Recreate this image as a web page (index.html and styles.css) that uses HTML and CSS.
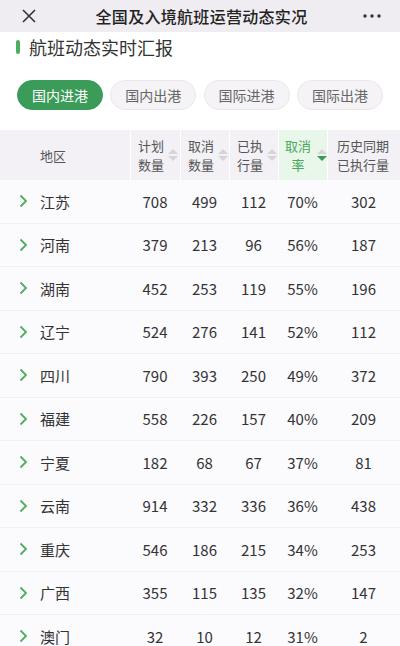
FILE: index.html
```html
<!DOCTYPE html>
<html lang="zh">
<head>
<meta charset="utf-8">
<link rel="stylesheet" href="styles.css">
</head>
<body>
<div class="nav">
  <svg class="close" width="16" height="16" viewBox="0 0 16 16"><path d="M2 2L14 14M14 2L2 14" stroke="#333" stroke-width="1.6" fill="none"/></svg>
  <div class="nav-title">全国及入境航班运营动态实况</div>
  <svg class="more" width="20" height="6" viewBox="0 0 20 6"><circle cx="3" cy="3" r="1.7" fill="#333"/><circle cx="10" cy="3" r="1.7" fill="#333"/><circle cx="17" cy="3" r="1.7" fill="#333"/></svg>
</div>
<div class="section-title"><span class="bar"></span>航班动态实时汇报</div>
<div class="tabs">
  <div class="tab active">国内进港</div>
  <div class="tab">国内出港</div>
  <div class="tab">国际进港</div>
  <div class="tab">国际出港</div>
</div>
<div class="table">
  <div class="th th-area">地区</div>
  <div class="th"><span class="lbl">计划<br>数量</span><span class="sort"><i class="up"></i><i class="down"></i></span></div>
  <div class="th"><span class="lbl">取消<br>数量</span><span class="sort"><i class="up"></i><i class="down"></i></span></div>
  <div class="th"><span class="lbl">已执<br>行量</span><span class="sort"><i class="up"></i><i class="down"></i></span></div>
  <div class="th th-active"><span class="lbl center">取消<br>率</span><span class="sort"><i class="up"></i><i class="down on"></i></span></div>
  <div class="th th-hist"><span class="lbl">历史同期<br>已执行量</span></div>
</div>
<div class="rows" id="rows">
  <div class="row"><div class="area"><svg class="chev" width="9" height="14" viewBox="0 0 9 14"><path d="M1.5 1.5L7 7L1.5 12.5" stroke="#4cae5e" stroke-width="1.8" fill="none"/></svg>江苏</div><div>708</div><div>499</div><div>112</div><div>70%</div><div>302</div></div>
  <div class="row"><div class="area"><svg class="chev" width="9" height="14" viewBox="0 0 9 14"><path d="M1.5 1.5L7 7L1.5 12.5" stroke="#4cae5e" stroke-width="1.8" fill="none"/></svg>河南</div><div>379</div><div>213</div><div>96</div><div>56%</div><div>187</div></div>
  <div class="row"><div class="area"><svg class="chev" width="9" height="14" viewBox="0 0 9 14"><path d="M1.5 1.5L7 7L1.5 12.5" stroke="#4cae5e" stroke-width="1.8" fill="none"/></svg>湖南</div><div>452</div><div>253</div><div>119</div><div>55%</div><div>196</div></div>
  <div class="row"><div class="area"><svg class="chev" width="9" height="14" viewBox="0 0 9 14"><path d="M1.5 1.5L7 7L1.5 12.5" stroke="#4cae5e" stroke-width="1.8" fill="none"/></svg>辽宁</div><div>524</div><div>276</div><div>141</div><div>52%</div><div>112</div></div>
  <div class="row"><div class="area"><svg class="chev" width="9" height="14" viewBox="0 0 9 14"><path d="M1.5 1.5L7 7L1.5 12.5" stroke="#4cae5e" stroke-width="1.8" fill="none"/></svg>四川</div><div>790</div><div>393</div><div>250</div><div>49%</div><div>372</div></div>
  <div class="row"><div class="area"><svg class="chev" width="9" height="14" viewBox="0 0 9 14"><path d="M1.5 1.5L7 7L1.5 12.5" stroke="#4cae5e" stroke-width="1.8" fill="none"/></svg>福建</div><div>558</div><div>226</div><div>157</div><div>40%</div><div>209</div></div>
  <div class="row"><div class="area"><svg class="chev" width="9" height="14" viewBox="0 0 9 14"><path d="M1.5 1.5L7 7L1.5 12.5" stroke="#4cae5e" stroke-width="1.8" fill="none"/></svg>宁夏</div><div>182</div><div>68</div><div>67</div><div>37%</div><div>81</div></div>
  <div class="row"><div class="area"><svg class="chev" width="9" height="14" viewBox="0 0 9 14"><path d="M1.5 1.5L7 7L1.5 12.5" stroke="#4cae5e" stroke-width="1.8" fill="none"/></svg>云南</div><div>914</div><div>332</div><div>336</div><div>36%</div><div>438</div></div>
  <div class="row"><div class="area"><svg class="chev" width="9" height="14" viewBox="0 0 9 14"><path d="M1.5 1.5L7 7L1.5 12.5" stroke="#4cae5e" stroke-width="1.8" fill="none"/></svg>重庆</div><div>546</div><div>186</div><div>215</div><div>34%</div><div>253</div></div>
  <div class="row"><div class="area"><svg class="chev" width="9" height="14" viewBox="0 0 9 14"><path d="M1.5 1.5L7 7L1.5 12.5" stroke="#4cae5e" stroke-width="1.8" fill="none"/></svg>广西</div><div>355</div><div>115</div><div>135</div><div>32%</div><div>147</div></div>
  <div class="row"><div class="area"><svg class="chev" width="9" height="14" viewBox="0 0 9 14"><path d="M1.5 1.5L7 7L1.5 12.5" stroke="#4cae5e" stroke-width="1.8" fill="none"/></svg>澳门</div><div>32</div><div>10</div><div>12</div><div>31%</div><div>2</div></div>
</div>
</body>
</html>
```
FILE: styles.css
```css
* { box-sizing: border-box; }
html, body { margin: 0; padding: 0; }
body {
  width: 400px;
  height: 646px;
  overflow: hidden;
  background: #fff;
  font-family: "Noto Sans CJK SC", "Noto Sans", sans-serif;
  color: #333;
}
.nav {
  height: 32px;
  background: #efedf1;
  display: flex;
  align-items: center;
  justify-content: space-between;
  padding: 0 18px 0 21px;
}
.close { display: block; }
.nav-title {
  font-size: 16px;
  color: #222;
  font-weight: 500;
  letter-spacing: 0.3px;
  margin-left: 4px;
}
.more { display: block; }
.section-title {
  display: flex;
  align-items: center;
  height: 30px;
  padding-left: 16px;
  font-size: 18px;
  color: #333;
}
.bar {
  width: 4px;
  height: 14px;
  border-radius: 2px;
  background: #4cae5e;
  margin-right: 9px;
}
.tabs {
  display: flex;
  gap: 7.3px;
  padding: 18px 17px 0;
}
.tab {
  width: 86px;
  height: 30px;
  border-radius: 15px;
  background: #f5f3f6;
  border: 1px solid #e9e7eb;
  color: #666;
  font-size: 14px;
  display: flex;
  align-items: center;
  justify-content: center;
}
.tab.active {
  background: #3b9c59;
  border-color: #3b9c59;
  color: #fff;
}
.table {
  margin-top: 20px;
  display: grid;
  grid-template-columns: 130px 49px 48px 48px 48px 1fr;
  column-gap: 1px;
  height: 50px;
  background: #fff;
}
.th {
  background: #f3f1f5;
  display: flex;
  align-items: center;
  padding-left: 7px;
  font-size: 13px;
  color: #555;
  line-height: 19px;
  white-space: nowrap;
}
.th-area { padding-left: 40px; }
.th-active { background: #e9f6ea; color: #4aa85c; padding-left: 6px; }
.th-hist { padding-left: 9px; }
.lbl { flex-shrink: 0; }
.lbl.center { text-align: center; }
.sort {
  display: flex;
  flex-direction: column;
  gap: 2px;
  margin-left: 4px;
  flex-shrink: 0;
}
.sort i {
  display: block;
  width: 0;
  height: 0;
  border-left: 5px solid transparent;
  border-right: 5px solid transparent;
}
.sort .up { border-bottom: 5px solid #d6d4d8; }
.sort .down { border-top: 5px solid #d6d4d8; }
.sort .down.on { border-top-color: #3b9c59; }
.th-active .sort { margin-left: 6px; }
.rows { background: #fbfafd; }
.row {
  display: grid;
  grid-template-columns: 130px 50px 49px 49px 49px 1fr;
  height: 43.5px;
  align-items: center;
  border-bottom: 1px solid #f2f0f4;
  font-size: 15px;
  color: #333;
}
.row > div { text-align: center; }
.row > .area {
  text-align: left;
  display: flex;
  align-items: center;
  padding-left: 19px;
}
.chev {
  display: block;
  margin-right: 12px;
}
```
